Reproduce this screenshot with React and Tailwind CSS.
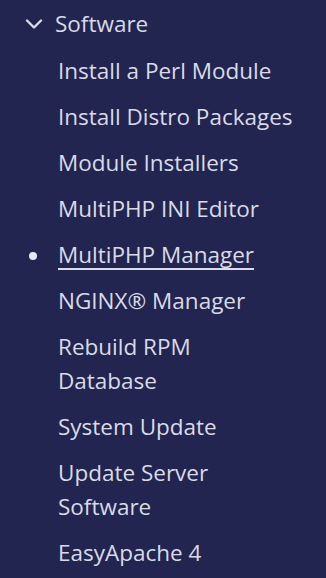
import { ChevronDown } from 'lucide-react';

const items = [
  'Install a Perl Module',
  'Install Distro Packages',
  'Module Installers',
  'MultiPHP INI Editor',
  'MultiPHP Manager',
  'NGINX® Manager',
  'Rebuild RPM Database',
  'System Update',
  'Update Server Software',
  'EasyApache 4',
];

export default function App() {
  return (
    <div
      className="w-[326px] h-[578px] overflow-hidden bg-[#21254f] text-[#d9dbe6]"
      style={{ fontFamily: '"Open Sans", "Noto Sans", sans-serif' }}
    >
      <div className="flex items-center h-[48px] pl-[20px]">
        <ChevronDown size={28} strokeWidth={2.1} className="text-[#d9dbe6]" />
        <span className="ml-[7px] text-[22.5px] leading-[34px]">Software</span>
      </div>
      <ul className="flex flex-col">
        {items.map(label => {
          const active = label === 'MultiPHP Manager';
          return (
            <li key={label} className="relative flex py-[6px] pl-[58px]">
              {active && (
                <span className="absolute left-[29px] top-[20px] w-[8px] h-[8px] rounded-full bg-[#e6e8f0]" />
              )}
              <span
                className={`w-[236px] text-[22.5px] leading-[34px] ${active ? 'underline underline-offset-[5px] decoration-[2px]' : ''}`}
              >
                {label}
              </span>
            </li>
          );
        })}
      </ul>
    </div>
  );
}
